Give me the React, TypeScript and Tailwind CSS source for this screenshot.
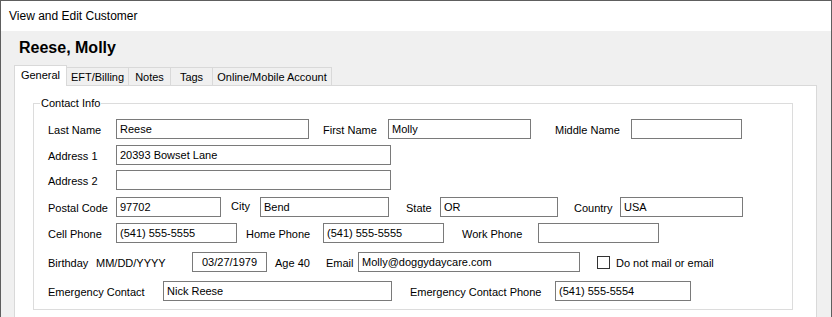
const Box = ({ value = "", className = "" }: { value?: string; className?: string }) => (
  <div className={`h-[20px] shrink-0 border border-[#7a7a7a] bg-white px-[3px] flex items-center whitespace-nowrap overflow-hidden ${className}`}>
    {value}
  </div>
);

const Lbl = ({ children, className = "" }: { children: React.ReactNode; className?: string }) => (
  <span className={`shrink-0 whitespace-nowrap pt-[2px] ${className}`}>{children}</span>
);

const tabs = [
  { name: "EFT/Billing", w: "w-[63px]" },
  { name: "Notes", w: "w-[43px]" },
  { name: "Tags", w: "w-[43px]" },
  { name: "Online/Mobile Account", w: "w-[120px]" },
];

export default function App() {
  return (
    <div className="w-[832px] h-[317px] overflow-hidden border-l border-t border-r border-[#5e5e5e] bg-[#f0f0f0] font-['Liberation_Sans',Arial,sans-serif] text-[11px] text-black">
      {/* Title bar */}
      <div className="h-[30px] bg-white pl-[8px] flex items-center text-[12px]">View and Edit Customer</div>

      <div className="pl-[13px] pr-[14px]">
        <div className="mt-[8px] ml-[5px] h-[18px] leading-[18px] text-[16px] font-bold">Reese, Molly</div>

        {/* Tabs */}
        <div className="mt-[8px] flex items-end h-[20px]">
          <div className="relative z-10 -mb-px w-[53px] h-[21px] border border-b-0 border-[#d9d9d9] bg-white flex items-center justify-center pb-[2px]">
            General
          </div>
          {tabs.map((t) => (
            <div
              key={t.name}
              className={`-ml-px ${t.w} h-[18px] border border-b-0 border-[#d9d9d9] bg-[#f0f0f0] flex items-center justify-center pt-[1px]`}
            >
              {t.name}
            </div>
          ))}
        </div>

        {/* Tab panel */}
        <div className="h-[260px] border border-[#d9d9d9] bg-white pl-[18px] pr-[23px] pt-[17px]">
          <div className="relative h-[207px] border border-[#dcdcdc] pl-[14px] pt-[15px]">
            <span className="absolute -top-[8px] left-[6px] bg-white px-[1px] leading-[14px]">Contact Info</span>

            {/* Row 1 */}
            <div className="flex items-center h-[20px]">
              <Lbl className="w-[68px]">Last Name</Lbl>
              <Box value="Reese" className="w-[193px]" />
              <Lbl className="ml-[14px] w-[65px]">First Name</Lbl>
              <Box value="Molly" className="w-[143px]" />
              <Lbl className="ml-[24px] w-[76px]">Middle Name</Lbl>
              <Box className="w-[111px]" />
            </div>

            {/* Row 2 */}
            <div className="mt-[6px] flex items-center h-[20px]">
              <Lbl className="w-[68px]">Address 1</Lbl>
              <Box value="20393 Bowset Lane" className="w-[275px]" />
            </div>

            {/* Row 3 */}
            <div className="mt-[5px] flex items-center h-[20px]">
              <Lbl className="w-[68px]">Address 2</Lbl>
              <Box className="w-[275px]" />
            </div>

            {/* Row 4 */}
            <div className="mt-[7px] flex items-center h-[20px]">
              <Lbl className="w-[68px]">Postal Code</Lbl>
              <Box value="97702" className="w-[105px]" />
              <Lbl className="ml-[10px] w-[29px] mb-[3px]">City</Lbl>
              <Box value="Bend" className="w-[129px]" />
              <Lbl className="ml-[17px] w-[34px]">State</Lbl>
              <Box value="OR" className="w-[118px]" />
              <Lbl className="ml-[16px] w-[46px]">Country</Lbl>
              <Box value="USA" className="w-[123px]" />
            </div>

            {/* Row 5 */}
            <div className="mt-[6px] flex items-center h-[20px]">
              <Lbl className="w-[68px]">Cell Phone</Lbl>
              <Box value="(541) 555-5555" className="w-[121px]" />
              <Lbl className="ml-[9px] w-[77px]">Home Phone</Lbl>
              <Box value="(541) 555-5555" className="w-[121px]" />
              <Lbl className="ml-[18px] w-[76px]">Work Phone</Lbl>
              <Box className="w-[121px]" />
            </div>

            {/* Row 6 */}
            <div className="mt-[9px] flex items-center h-[20px]">
              <Lbl className="w-[48px]">Birthday</Lbl>
              <Lbl className="w-[96px]">MM/DD/YYYY</Lbl>
              <Box value="03/27/1979" className="w-[75px] justify-center" />
              <Lbl className="ml-[8px] w-[51px]">Age 40</Lbl>
              <Lbl className="w-[32px]">Email</Lbl>
              <Box value="Molly@doggydaycare.com" className="w-[222px]" />
              <span className="ml-[17px] w-[13px] h-[13px] shrink-0 border border-[#333333] bg-white" />
              <Lbl className="ml-[6px]">Do not mail or email</Lbl>
            </div>

            {/* Row 7 */}
            <div className="mt-[9px] flex items-center h-[20px]">
              <Lbl className="w-[115px]">Emergency Contact</Lbl>
              <Box value="Nick Reese" className="w-[229px]" />
              <Lbl className="ml-[18px] w-[145px]">Emergency Contact Phone</Lbl>
              <Box value="(541) 555-5554" className="w-[136px]" />
            </div>
          </div>
        </div>
      </div>
    </div>
  );
}
